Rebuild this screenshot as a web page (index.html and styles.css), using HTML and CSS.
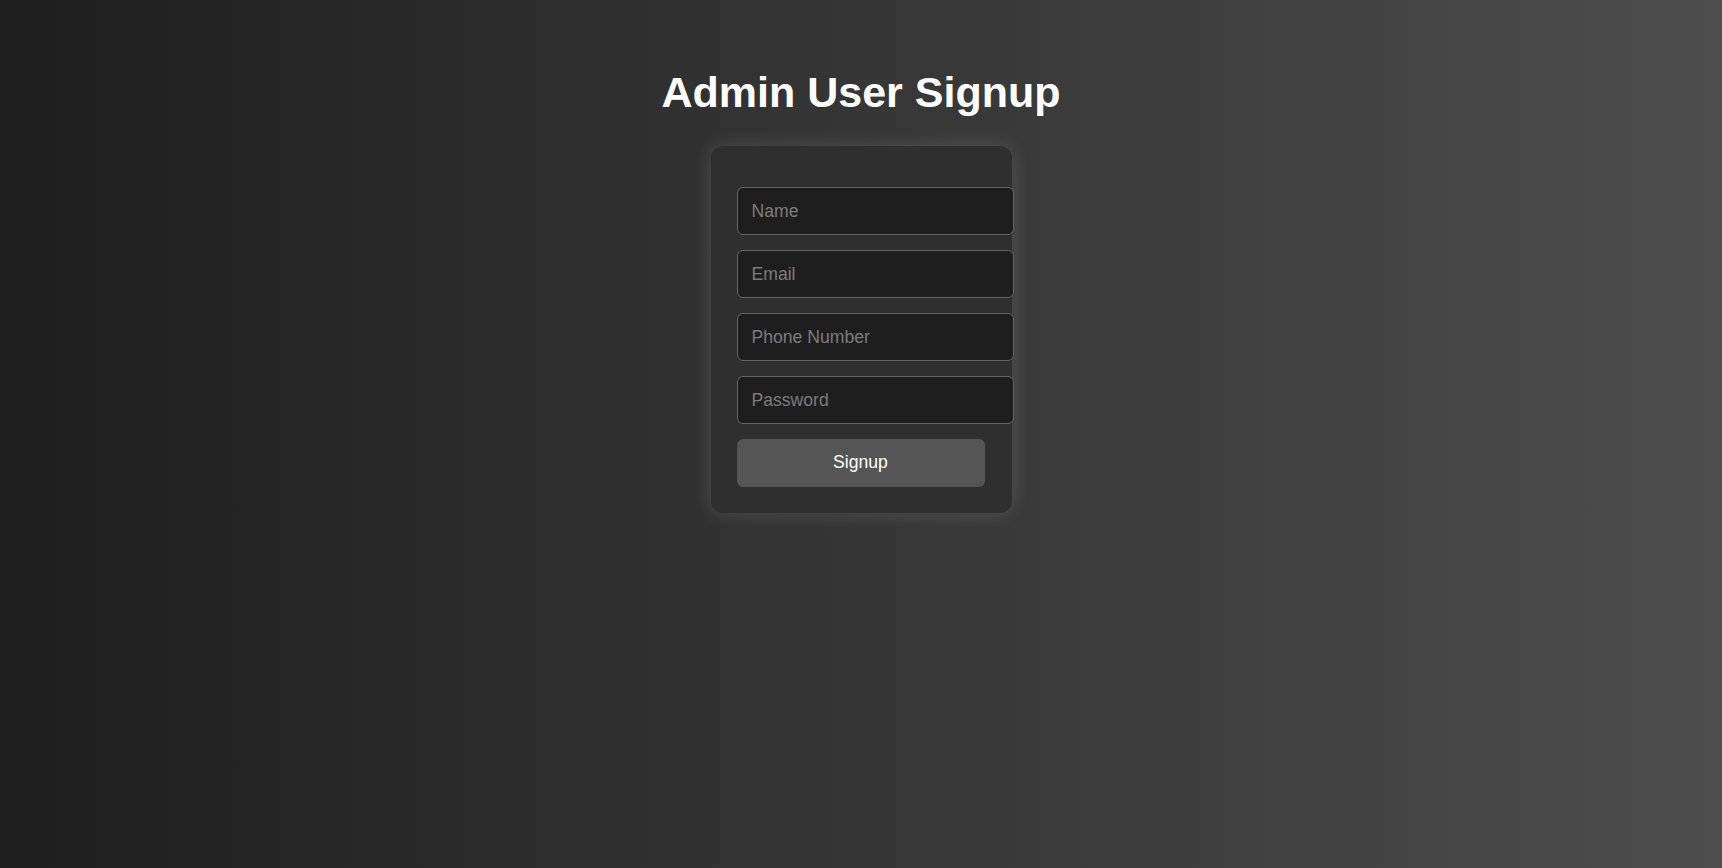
FILE: index.html
```html
<!DOCTYPE html>
<html lang="en">
<head>
<meta charset="utf-8">
<title>Admin User Signup</title>
<link rel="stylesheet" href="styles.css">
</head>
<body>
<main class="page">
  <h1 class="title">Admin User Signup</h1>
  <form class="card">
    <input class="field" type="text" placeholder="Name">
    <input class="field" type="email" placeholder="Email">
    <input class="field" type="tel" placeholder="Phone Number">
    <input class="field" type="password" placeholder="Password">
    <button class="btn" type="button">Signup</button>
  </form>
</main>
</body>
</html>
```
FILE: styles.css
```css
html, body {
  margin: 0;
  padding: 0;
  height: 100%;
}
body {
  background: linear-gradient(to right, #1e1e1e 0%, #4d4d4d 100%);
  font-family: "Liberation Sans", Arial, sans-serif;
  color: #fff;
}
.page {
  display: flex;
  flex-direction: column;
  align-items: center;
  min-height: 100%;
}
.title {
  margin: 68px 0 29px;
  font-size: 43px;
  font-weight: bold;
  line-height: normal;
  color: #fff;
}
.card {
  width: 248px;
  padding: 26px 27px 26.5px 26px;
  background: #2f2f2f;
  border-radius: 12px;
  box-shadow: 0 0 20px rgba(255, 255, 255, 0.15);
}
.field {
  display: block;
  box-sizing: border-box;
  width: 277px;
  height: 48px;
  margin: 15px 0;
  padding: 0 13px 0 14px;
  font-family: "Liberation Sans", Arial, sans-serif;
  font-size: 17.6px;
  color: #fff;
  background: #1e1e1e;
  border: 1px solid #646464;
  border-radius: 6px;
  outline: none;
}
.field::placeholder {
  color: #7c7c7c;
}
.btn {
  display: block;
  box-sizing: border-box;
  width: 248px;
  height: 47.5px;
  margin: 15px 0 0;
  padding: 0;
  font-family: "Liberation Sans", Arial, sans-serif;
  font-size: 17.6px;
  color: #fff;
  background: #555555;
  border: none;
  border-radius: 6px;
  cursor: pointer;
}
```
